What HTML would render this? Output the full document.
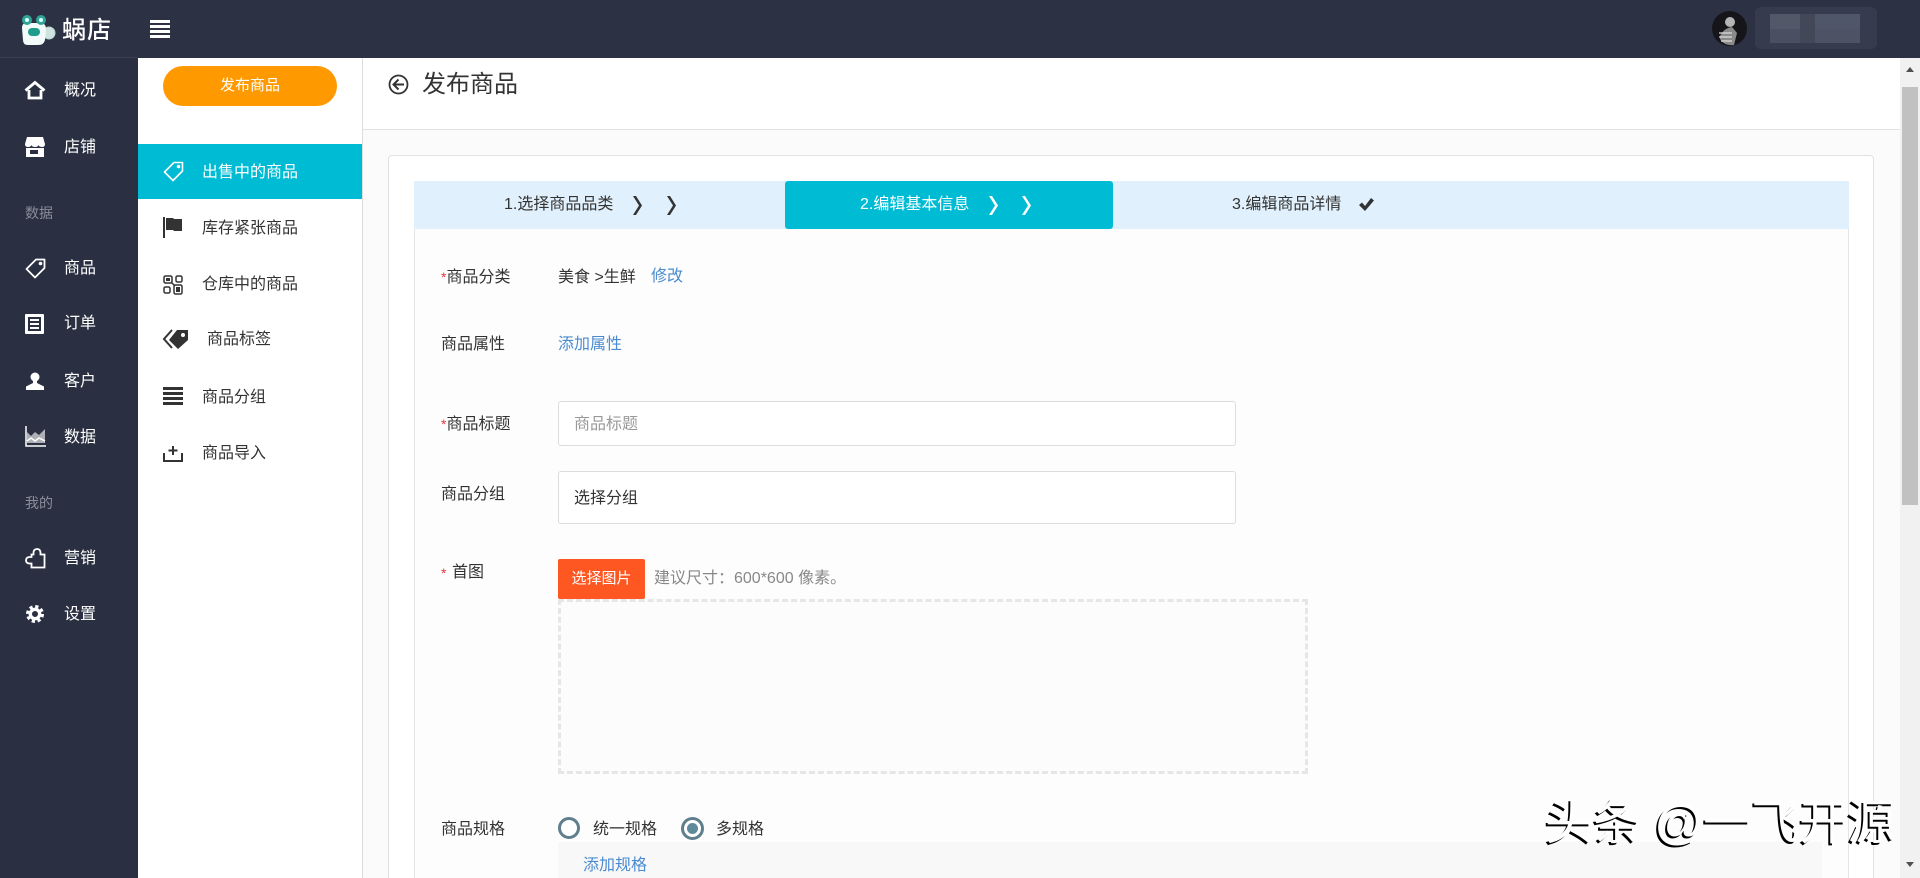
<!DOCTYPE html>
<html lang="zh"><head><meta charset="utf-8"><title>发布商品</title>
<style>
html,body{margin:0;padding:0;width:1920px;height:878px;overflow:hidden;background:#fff}
body{position:relative;font-family:"Liberation Sans","Noto Sans CJK SC",sans-serif;font-size:16px;color:#333}
.a{position:absolute}
.t{position:absolute;line-height:24px;white-space:nowrap}
.w{color:#fff}
.cat{color:#8b8e99;font-size:14px}
.l{color:#4a8bd0}
.r{color:#e4393c}
svg{position:absolute;overflow:visible}
</style></head><body>
<!-- backgrounds -->
<div class="a" style="left:0;top:0;width:1920px;height:58px;background:#2c3144"></div>
<div class="a" style="left:0;top:57px;width:138px;height:821px;background:#2a3042;border-top:1px solid #3b4052;box-sizing:border-box"></div>
<div class="a" style="left:138px;top:58px;width:224px;height:820px;background:#fff;border-right:1px solid #ddd"></div>
<div class="a" style="left:363px;top:58px;width:1537px;height:71px;background:#fff;border-bottom:1px solid #e2e2e2"></div>
<div class="a" style="left:363px;top:130px;width:1537px;height:748px;background:#fbfbfb"></div>
<!-- scrollbar -->
<div class="a" style="left:1900px;top:58px;width:20px;height:820px;background:#f1f1f1"></div>
<div class="a" style="left:1902px;top:87px;width:16px;height:418px;background:#c1c1c1"></div>
<div class="a" style="left:1906px;top:67px;width:0;height:0;border-left:4.5px solid transparent;border-right:4.5px solid transparent;border-bottom:5px solid #505050"></div>
<div class="a" style="left:1906px;top:862px;width:0;height:0;border-left:4.5px solid transparent;border-right:4.5px solid transparent;border-top:5px solid #505050"></div>

<!-- logo -->
<svg style="left:20px;top:14px" width="36" height="32" viewBox="0 0 36 32">
<circle cx="29" cy="19" r="6" fill="#cfe3e0" stroke="#b8d4d0" stroke-width="1"/>
<path d="M2 14Q2 8 8 9L20 9Q26 9 26 15L25 26Q24 31 18 31L8 31Q3 31 3 26Z" fill="#f2fbfa"/>
<circle cx="7" cy="6" r="5" fill="#2fa596"/><circle cx="7" cy="6" r="2" fill="#dff"/>
<circle cx="21" cy="6" r="5" fill="#2fa596"/><circle cx="21" cy="6" r="2" fill="#dff"/>
<rect x="8" y="14" width="12" height="8" rx="4" fill="#1f9c8c"/>
</svg>
<div class="t w" style="left:62px;top:16px;font-size:24px;line-height:30px;letter-spacing:1px;font-weight:500">蜗店</div>
<!-- hamburger -->
<div class="a" style="left:150px;top:20px;width:20px;height:3px;background:#fff"></div>
<div class="a" style="left:150px;top:25px;width:20px;height:3px;background:#fff"></div>
<div class="a" style="left:150px;top:30px;width:20px;height:3px;background:#fff"></div>
<div class="a" style="left:150px;top:35px;width:20px;height:3px;background:#fff"></div>
<!-- user -->
<svg style="left:1712px;top:11px" width="35" height="35" viewBox="0 0 35 35"><circle cx="17.500" cy="17.500" r="17.500" fill="#15151a"/><circle cx="18" cy="11" r="5" fill="#b5b5b5"/><path d="M8 25Q12 17 20 16L25 22L22 34Q12 35 8 28Z" fill="#8a8a8a"/><path d="M7 22H20M7 26H20M9 30H20" stroke="#ddd" stroke-width="1.300"/></svg>
<div class="a" style="left:1755px;top:7px;width:122px;height:42px;background:#363b4e;border-radius:6px"></div>
<div class="a" style="left:1770px;top:14px;width:30px;height:15px;background:#535869"></div>
<div class="a" style="left:1770px;top:29px;width:30px;height:14px;background:#4a5062"></div>
<div class="a" style="left:1800px;top:14px;width:15px;height:29px;background:#434859"></div>
<div class="a" style="left:1815px;top:14px;width:45px;height:15px;background:#50566a"></div>
<div class="a" style="left:1815px;top:29px;width:45px;height:14px;background:#4d5365"></div>

<!-- main nav icons -->
<svg style="left:25px;top:81px" width="20" height="18" viewBox="0 0 20 18"><path d="M0.500 9.500L10 1.500L19.500 9.500" fill="none" stroke="#fff" stroke-width="2.800"/><path d="M4 9V17H16V9" fill="none" stroke="#fff" stroke-width="2.800"/></svg>
<svg style="left:25px;top:137px" width="20" height="20" viewBox="0 0 20 20"><path d="M2 0H18L20 7Q20 10 17 10Q14 10 13.500 8Q13 10 10 10Q7 10 6.500 8Q6 10 3 10Q0 10 0 7Z" fill="#fff"/><path d="M1 11H19V20H1Z M5 13V17H13V13Z" fill="#fff" fill-rule="evenodd"/></svg>
<svg style="left:25px;top:258px" width="21" height="21" viewBox="0 0 21 21"><path d="M1.500 11L11 1.500H19.500V10L10 19.500Z" fill="none" stroke="#fff" stroke-width="1.800" stroke-linejoin="round"/><circle cx="15.500" cy="5.500" r="1.800" fill="#fff"/></svg>
<svg style="left:25px;top:314px" width="19" height="20" viewBox="0 0 19 20"><path d="M0 1Q0 0 1 0H18Q19 0 19 1V19Q19 20 18 20H1Q0 20 0 19Z M3 3V17H16V3Z" fill="#fff" fill-rule="evenodd"/><path d="M5 6H14M5 10H14M5 14H14" stroke="#fff" stroke-width="2"/></svg>
<svg style="left:26px;top:372px" width="18" height="18" viewBox="0 0 18 18"><circle cx="9" cy="5" r="4.500" fill="#fff"/><path d="M7 8H11V11L18 14.500V18H0V14.500L7 11Z" fill="#fff"/></svg>
<svg style="left:25px;top:426px" width="21" height="21" viewBox="0 0 21 21"><path d="M1 0V20H21" fill="none" stroke="#fff" stroke-width="1.500"/><path d="M2 6L6 10L10 6L14 9L20 3V17H2Z" fill="#aeb0b5"/><path d="M2 15L6 12L10 15L14 12L20 15" fill="none" stroke="#fff" stroke-width="1.500"/></svg>
<svg style="left:25px;top:548px" width="21" height="21" viewBox="0 0 21 21"><path d="M8.500 6.500V5Q8.500 1 12 1Q15.500 1 15.500 5V6.500H19.500V19.500H6.500V15.500H5Q1 15.500 1 12.500Q1 9 5 9H6.500V6.500Z" fill="none" stroke="#fff" stroke-width="1.800"/></svg>
<svg style="left:26px;top:605px" width="18" height="18" viewBox="0 0 18 18"><circle cx="9" cy="9" r="7.500" fill="none" stroke="#fff" stroke-width="3" stroke-dasharray="3.200 2.690"/><circle cx="9" cy="9" r="4.700" fill="none" stroke="#fff" stroke-width="3.400"/></svg>

<div class="t w" style="left:64px;top:79px">概况</div>
<div class="t w" style="left:64px;top:136px">店铺</div>
<div class="t cat" style="left:25px;top:201px">数据</div>
<div class="t w" style="left:64px;top:257px">商品</div>
<div class="t w" style="left:64px;top:312px">订单</div>
<div class="t w" style="left:64px;top:370px">客户</div>
<div class="t w" style="left:64px;top:426px">数据</div>
<div class="t cat" style="left:25px;top:491px">我的</div>
<div class="t w" style="left:64px;top:547px">营销</div>
<div class="t w" style="left:64px;top:603px">设置</div>

<!-- sub nav -->
<div class="a" style="left:163px;top:66px;width:174px;height:40px;border-radius:20px;background:#ff9900;color:#fff;text-align:center;line-height:40px;font-size:15px">发布商品</div>
<div class="a" style="left:138px;top:144px;width:224px;height:55px;background:#00bbd4"></div>
<svg style="left:163px;top:161px" width="21" height="21" viewBox="0 0 21 21"><path d="M1.500 11L11 1.500H19.500V10L10 19.500Z" fill="none" stroke="#fff" stroke-width="1.600" stroke-linejoin="round"/><circle cx="15.500" cy="5.500" r="1.800" fill="#fff"/></svg>
<div class="t w" style="left:202px;top:161px">出售中的商品</div>
<svg style="left:163px;top:217px" width="20" height="21" viewBox="0 0 20 21"><path d="M1 0V21" stroke="#333" stroke-width="2"/><path d="M3 1H10L11 2H19V14H11L10 13H3Z" fill="#333"/></svg>
<div class="t" style="left:202px;top:217px">库存紧张商品</div>
<svg style="left:163px;top:275px" width="20" height="20" viewBox="0 0 20 20"><rect x="1" y="1" width="8" height="7" rx="1.500" fill="none" stroke="#333" stroke-width="1.500"/><rect x="3" y="3" width="4" height="3" fill="#333"/><rect x="13" y="1" width="6" height="6" rx="1.500" fill="none" stroke="#333" stroke-width="1.500"/><rect x="1" y="12" width="6" height="6" rx="1.500" fill="none" stroke="#333" stroke-width="1.500"/><rect x="11" y="10" width="8" height="9" rx="1.500" fill="none" stroke="#333" stroke-width="1.500"/><rect x="13" y="12" width="4" height="5" fill="#333"/><path d="M8 7L12 11" stroke="#333" stroke-width="1.500"/></svg>
<div class="t" style="left:202px;top:273px">仓库中的商品</div>
<svg style="left:163px;top:329px" width="25" height="21" viewBox="0 0 25 21"><path d="M9 1L1 10L9 19" fill="none" stroke="#333" stroke-width="2"/><path d="M14 1H25V11L15 20L6 11Z" fill="#333"/><circle cx="20" cy="6" r="2" fill="#fff"/></svg>
<div class="t" style="left:207px;top:328px">商品标签</div>
<svg style="left:163px;top:387px" width="20" height="18" viewBox="0 0 20 18"><path d="M0 1.500H20M0 6.500H20M0 11.500H20M0 16.500H20" stroke="#333" stroke-width="3"/></svg>
<div class="t" style="left:202px;top:386px">商品分组</div>
<svg style="left:163px;top:446px" width="20" height="16" viewBox="0 0 20 16"><path d="M1 7V15H19V7" fill="none" stroke="#333" stroke-width="2"/><path d="M10 0V9M5.500 4.500H14.500" stroke="#333" stroke-width="2"/></svg>
<div class="t" style="left:202px;top:442px">商品导入</div>

<!-- title -->
<svg style="left:388px;top:74px" width="21" height="21" viewBox="0 0 21 21"><circle cx="10.500" cy="10.500" r="9" fill="none" stroke="#333" stroke-width="1.800"/><path d="M10.500 5.500L5.500 10.500L10.500 15.500M5.500 10.500H16" fill="none" stroke="#333" stroke-width="2"/></svg>
<div class="t" style="left:422px;top:69px;font-size:24px;line-height:32px">发布商品</div>

<!-- card -->
<div class="a" style="left:388px;top:155px;width:1486px;height:740px;background:#fff;border:1px solid #e2e2e2;border-radius:4px;box-sizing:border-box"></div>
<div class="a" style="left:414px;top:181px;width:1435px;height:710px;background:#fdfdfd;border:1px solid #e4e4e4;border-top:0;box-sizing:border-box"></div>
<div class="a" style="left:414px;top:181px;width:1435px;height:48px;background:#e0f0fc"></div>
<div class="a" style="left:785px;top:181px;width:328px;height:48px;background:#00bbd4;border-radius:3px"></div>

<div class="t" style="left:504px;top:193px">1.选择商品品类</div>
<svg style="left:632px;top:196px" width="46" height="19" viewBox="0 0 46 19"><path d="M1 0L7 9.500L1 19H4L10 9.500L4 0ZM35 0L41 9.500L35 19H38L44 9.500L38 0Z" fill="#333"/></svg>
<div class="t w" style="left:860px;top:193px">2.编辑基本信息</div>
<svg style="left:988px;top:196px" width="46" height="19" viewBox="0 0 46 19"><path d="M1 0L7 9.500L1 19H4L10 9.500L4 0ZM34 0L40 9.500L34 19H37L43 9.500L37 0Z" fill="#fff"/></svg>
<div class="t" style="left:1232px;top:193px">3.编辑商品详情</div>
<svg style="left:1359px;top:198px" width="15" height="13" viewBox="0 0 15 13"><path d="M0 7L3 4.500L6 8L12 0L15 2.500L6 13Z" fill="#333"/></svg>

<!-- form -->
<div class="t" style="left:441px;top:265px"><span class="r" style="font-size:14px">*</span>商品分类</div>
<div class="t" style="left:558px;top:266px">美食 &gt;生鲜</div>
<div class="t l" style="left:651px;top:265px">修改</div>
<div class="t" style="left:441px;top:333px">商品属性</div>
<div class="t l" style="left:558px;top:333px">添加属性</div>

<div class="t" style="left:441px;top:412px"><span class="r" style="font-size:14px">*</span>商品标题</div>
<div class="a" style="left:558px;top:401px;width:678px;height:45px;background:#fff;border:1px solid #ddd;border-radius:3px;box-sizing:border-box"></div>
<div class="t" style="left:574px;top:413px;color:#999">商品标题</div>
<div class="t" style="left:441px;top:483px">商品分组</div>
<div class="a" style="left:558px;top:471px;width:678px;height:53px;background:#fff;border:1px solid #ddd;border-radius:3px;box-sizing:border-box"></div>
<div class="t" style="left:574px;top:487px">选择分组</div>

<div class="t" style="left:441px;top:561px"><span class="r" style="font-size:14px">*</span></div>
<div class="t" style="left:452px;top:561px">首图</div>
<div class="a" style="left:558px;top:559px;width:87px;height:40px;background:#ff5722;border-radius:2px;color:#fff;text-align:center;line-height:40px;font-size:15px">选择图片</div>
<div class="t" style="left:654px;top:567px;color:#888">建议尺寸：600*600 像素。</div>
<div class="a" style="left:558px;top:599px;width:750px;height:175px;background:#fcfcfc;border:3px dashed #e6e6e6;box-sizing:border-box"></div>

<div class="t" style="left:441px;top:818px">商品规格</div>
<div class="a" style="left:558px;top:817px;width:22px;height:22px;border:3px solid #5f7f8c;border-radius:50%;box-sizing:border-box;background:#fff"></div>
<div class="t" style="left:593px;top:818px">统一规格</div>
<div class="a" style="left:681px;top:817px;width:23px;height:23px;border:3px solid #5f7f8c;border-radius:50%;box-sizing:border-box;background:#fff"></div>
<div class="a" style="left:687px;top:823px;width:11px;height:11px;border-radius:50%;background:#5f8a9c"></div>
<div class="t" style="left:716px;top:818px">多规格</div>
<div class="a" style="left:558px;top:842px;width:1264px;height:36px;background:#f8f8f8"></div>
<div class="t l" style="left:583px;top:854px">添加规格</div>

<!-- watermark -->
<div class="t" style="left:1545px;top:796px;font-size:48px;line-height:56px;color:#fff;text-shadow:-2px 2px 0 #000;white-space:nowrap">头条 @一飞开源</div>
</body></html>
